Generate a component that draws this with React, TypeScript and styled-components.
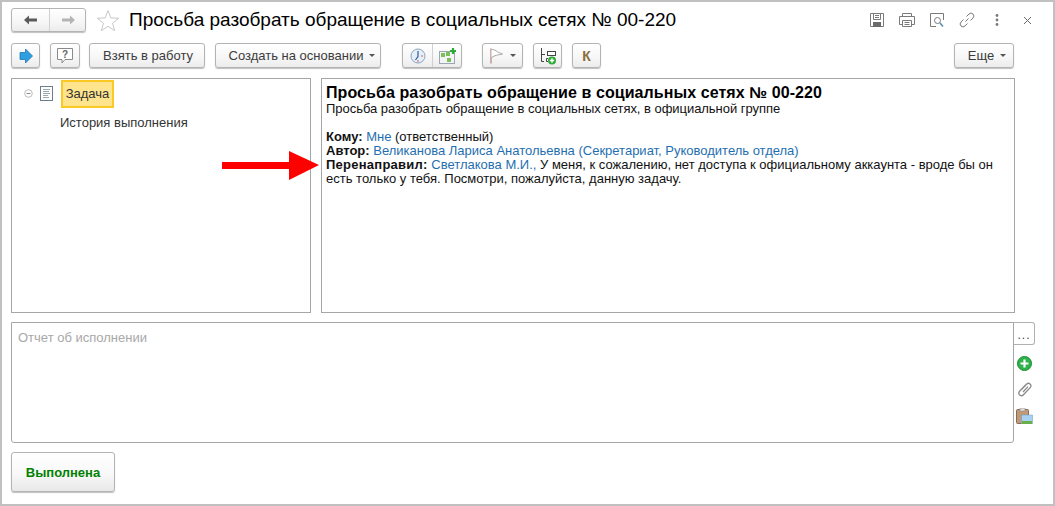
import React from "react";
import styled, { createGlobalStyle } from "styled-components";

const Global = createGlobalStyle`
  html, body { margin: 0; padding: 0; background: #fff; }
  body { font-family: "Liberation Sans", Arial, sans-serif; font-size: 13px; color: #1a1a1a; }
`;

const Frame = styled.div`
  position: relative;
  box-sizing: border-box;
  width: 1055px;
  height: 506px;
  border: 2px solid #c0c0c0;
  padding: 6px 18px 0 9px;
  background: #fff;
  overflow: hidden;
`;

const Header = styled.div`
  display: flex;
  align-items: center;
  height: 24px;
`;

const Title = styled.h1`
  margin: 0 0 0 9px;
  font-size: 19px;
  font-weight: 400;
  color: #000;
  white-space: nowrap;
  flex: 1;
  line-height: 26px;
`;

const Group = styled.div<{ $h?: number; $ml?: number }>`
  display: flex;
  box-sizing: border-box;
  height: ${(p) => p.$h ?? 24}px;
  margin-left: ${(p) => p.$ml ?? 0}px;
  border: 1px solid #b4b4b4;
  border-radius: 3px;
  background: linear-gradient(#ffffff, #f6f6f6 60%, #ececec);
  box-shadow: 0 1px 1px rgba(0, 0, 0, 0.25);
`;

const Seg = styled.div<{ $w: number; $sep?: boolean }>`
  width: ${(p) => p.$w}px;
  display: flex;
  align-items: center;
  justify-content: center;
  border-left: ${(p) => (p.$sep ? "1px solid #d0d0d0" : "none")};
`;

const StarWrap = styled.div`
  margin-left: 10px;
  display: flex;
`;

const TitleIcons = styled.div`
  display: flex;
  align-items: center;
  margin-right: -7px;
`;

const TitleIcon = styled.div`
  width: 30px;
  display: flex;
  justify-content: center;
`;

const Toolbar = styled.div`
  display: flex;
  align-items: flex-start;
  margin-top: 11px;
  height: 35px;
  padding-right: 21px;
`;

const Btn = styled.div<{ $w: number; $ml: number; $pl?: number }>`
  box-sizing: border-box;
  width: ${(p) => p.$w}px;
  margin-left: ${(p) => p.$ml}px;
  padding-left: ${(p) => p.$pl ?? 0}px;
  height: 25px;
  display: flex;
  align-items: center;
  justify-content: center;
  gap: 6px;
  border: 1px solid #b4b4b4;
  border-radius: 3px;
  background: linear-gradient(#ffffff, #f6f6f6 60%, #ececec);
  box-shadow: 0 1px 1px rgba(0, 0, 0, 0.25);
  color: #3c3c3c;
  font-size: 13px;
  white-space: nowrap;
`;

const Caret = styled.span`
  display: inline-block;
  width: 0;
  height: 0;
  border-left: 3px solid transparent;
  border-right: 3px solid transparent;
  border-top: 3px solid #555;
`;

const KLetter = styled.span`
  font-weight: 700;
  font-size: 14px;
  color: #8a6d3b;
`;

const Spacer = styled.div`
  flex: 1;
`;

const Panels = styled.div`
  display: flex;
  gap: 10px;
  height: 235px;
`;

const TreePanel = styled.div`
  box-sizing: border-box;
  width: 300px;
  border: 1px solid #a6a6a6;
  padding-top: 1px;
`;

const TreeRow = styled.div`
  display: flex;
  align-items: center;
  height: 27px;
  padding-left: 12px;
`;

const DocIcon = styled.div`
  display: flex;
  margin-left: 7px;
`;

const Selected = styled.div`
  box-sizing: border-box;
  margin-left: 8px;
  height: 28px;
  width: 53px;
  border: 2px solid #fcc824;
  background: #fee48c;
  display: flex;
  align-items: center;
  justify-content: center;
  color: #333;
`;

const TreeChild = styled.div`
  margin: 9px 0 0 48px;
  color: #333;
  line-height: 14px;
`;

const InfoPanel = styled.div`
  box-sizing: border-box;
  width: 694px;
  border: 1px solid #a6a6a6;
  padding: 4px 4px 0 4px;
  line-height: 14px;
  color: #111;
`;

const InfoTitle = styled.div`
  font-size: 16px;
  font-weight: 700;
  line-height: 19px;
  letter-spacing: 0.08px;
  color: #000;
`;

const Paragraph = styled.div`
  margin-bottom: 14px;
  letter-spacing: -0.04px;
`;

const WideLabel = styled.b`
  letter-spacing: 0.25px;
`;

const Link = styled.span`
  color: #1f6fb0;
`;

const Arrow = styled.svg`
  position: absolute;
  left: 220px;
  top: 149px;
`;

const ReportRow = styled.div`
  display: flex;
  margin-top: 9px;
  height: 121px;
`;

const ReportBox = styled.div`
  box-sizing: border-box;
  width: 1003px;
  border: 1px solid #a6a6a6;
  border-radius: 0 0 3px 3px;
  padding: 7px 6px;
  color: #a8a8a8;
  line-height: 16px;
`;

const Side = styled.div`
  display: flex;
  flex-direction: column;
  width: 21px;
`;

const DotsBtn = styled.div`
  box-sizing: border-box;
  height: 23px;
  width: 22px;
  margin-left: -1px;
  border: 1px solid #b0b0b0;
  border-left-color: #a6a6a6;
  border-radius: 0 3px 3px 0;
  display: flex;
  align-items: center;
  justify-content: center;
  color: #444;
  font-size: 12px;
  letter-spacing: 1px;
  padding-top: 2px;
`;

const SideIcons = styled.div`
  display: flex;
  flex-direction: column;
  align-items: center;
  gap: 11px;
  margin-top: 11px;
`;

const Footer = styled.div`
  margin-top: 9px;
`;

const DoneBtn = styled.div`
  box-sizing: border-box;
  width: 104px;
  height: 40px;
  display: flex;
  align-items: center;
  justify-content: center;
  border: 1px solid #b4b4b4;
  border-radius: 3px;
  background: linear-gradient(#ffffff, #f8f8f8 55%, #e8e8e8);
  box-shadow: 0 1px 1px rgba(0, 0, 0, 0.25);
  color: #008000;
  font-weight: 700;
  font-size: 13px;
`;

const IconStroke = { fill: "none", stroke: "#7a7a7a", strokeWidth: 1 };

export default function App() {
  return (
    <>
      <Global />
      <Frame>
        <Header>
          <Group>
            <Seg $w={37}>
              <svg width="16" height="12" viewBox="0 0 16 12">
                <path d="M1 6 L6 1.5 V4.5 H14 V7.5 H6 V10.5 Z" fill="#5a5a5a" />
              </svg>
            </Seg>
            <Seg $w={35} $sep>
              <svg width="16" height="12" viewBox="0 0 16 12">
                <path d="M15 6 L10 1.5 V4.5 H2 V7.5 H10 V10.5 Z" fill="#b4b4b4" />
              </svg>
            </Seg>
          </Group>
          <StarWrap>
            <svg width="24" height="23" viewBox="0 0 24 23">
              <path d="M12 1.5 L14.8 8.9 L22.8 9.2 L16.5 14.1 L18.7 21.7 L12 17.3 L5.3 21.7 L7.5 14.1 L1.2 9.2 L9.2 8.9 Z" fill="#fff" stroke="#c8c8c8" />
            </svg>
          </StarWrap>
          <Title>Просьба разобрать обращение в социальных сетях № 00-220</Title>
          <TitleIcons>
            <TitleIcon>
              <svg width="16" height="16" viewBox="0 0 16 16">
                <path d="M1.5 1.5 H14.5 V14.5 H1.5 Z" {...IconStroke} />
                <path d="M4.5 1.5 V7.5 H11.5 V1.5 M6 3.5 H10 M6 5.5 H10" {...IconStroke} />
                <rect x="4" y="10" width="8" height="5" fill="#6a6a6a" />
              </svg>
            </TitleIcon>
            <TitleIcon>
              <svg width="18" height="16" viewBox="0 0 18 16">
                <path d="M4.5 4.5 V1.5 H13.5 V4.5 M4.5 12.5 H1.5 V4.5 H16.5 V12.5 H13.5" {...IconStroke} />
                <path d="M4.5 8.5 H13.5 V14.5 H4.5 Z M6.5 10.5 H11.5 M6.5 12.5 H11.5" {...IconStroke} />
              </svg>
            </TitleIcon>
            <TitleIcon>
              <svg width="16" height="16" viewBox="0 0 16 16">
                <path d="M14.5 1.5 H1.5 V14.5 H7" {...IconStroke} />
                <path d="M14.5 1.5 V8" {...IconStroke} />
                <circle cx="8.5" cy="8.5" r="3" {...IconStroke} />
                <path d="M11 11 L14 14.5" stroke="#5a8aa8" strokeWidth="1.5" />
              </svg>
            </TitleIcon>
            <TitleIcon>
              <svg width="16" height="16" viewBox="0 0 16 16">
                <path d="M6.5 9.5 L9.5 6.5 M7.5 4.5 L10 2 A2.8 2.8 0 0 1 14 6 L11.5 8.5 M8.5 11.5 L6 14 A2.8 2.8 0 0 1 2 10 L4.5 7.5" {...IconStroke} />
              </svg>
            </TitleIcon>
            <TitleIcon>
              <svg width="4" height="14" viewBox="0 0 4 14">
                <circle cx="2" cy="2.5" r="1.4" fill="#7a7a7a" />
                <circle cx="2" cy="7" r="1.4" fill="#7a7a7a" />
                <circle cx="2" cy="11.5" r="1.4" fill="#7a7a7a" />
              </svg>
            </TitleIcon>
            <TitleIcon>
              <svg width="9" height="9" viewBox="0 0 9 9">
                <path d="M1 1 L8 8 M8 1 L1 8" stroke="#6a6a6a" strokeWidth="1" fill="none" />
              </svg>
            </TitleIcon>
          </TitleIcons>
        </Header>

        <Toolbar>
          <Btn $w={29} $ml={0}>
            <svg width="14" height="16" viewBox="0 0 14 16">
              <path d="M1 4.5 H6.5 V1 L13.5 8 L6.5 15 V11.5 H1 Z" fill="#2f9fe0" stroke="#1c79b8" strokeWidth="0.8" />
            </svg>
          </Btn>
          <Btn $w={30} $ml={10}>
            <svg width="18" height="18" viewBox="0 0 18 18">
              <path d="M1.5 1.5 H16.5 V12.5 H9 L6 16 V12.5 H1.5 Z" fill="#fff" stroke="#8a8a8a" />
              <text x="9" y="10.5" fontSize="10" fontWeight="700" textAnchor="middle" fill="#666" fontFamily="Liberation Sans">?</text>
            </svg>
          </Btn>
          <Btn $w={116} $ml={9} $pl={2}>Взять в работу</Btn>
          <Btn $w={166} $ml={10} $pl={8}>Создать на основании <Caret /></Btn>
          <Group $h={25} $ml={21}>
            <Seg $w={29}>
              <svg width="16" height="16" viewBox="0 0 16 16">
                <circle cx="8" cy="8" r="7" fill="#e6eef6" stroke="#8aa4c0" />
                <path d="M8 3 V8.5 L5.5 12" stroke="#2f5f9f" strokeWidth="1.2" fill="none" />
                <circle cx="12" cy="8" r="0.8" fill="#d05050" />
                <circle cx="8" cy="13" r="0.8" fill="#d05050" />
              </svg>
            </Seg>
            <Seg $w={28} $sep>
              <svg width="17" height="16" viewBox="0 0 17 16">
                <rect x="0.5" y="3.5" width="15" height="12" fill="#f2f4f6" stroke="#9aa6b0" />
                <rect x="2" y="5" width="4" height="4" fill="#7cc05c" />
                <rect x="7" y="4" width="4" height="4" fill="#7cc05c" />
                <rect x="8" y="10" width="4" height="4" fill="#7cc05c" />
                <path d="M11 3 H17 M14 0 V6" stroke="#2ea836" strokeWidth="2.2" />
              </svg>
            </Seg>
          </Group>
          <Btn $w={41} $ml={20}>
            <svg width="15" height="16" viewBox="0 0 15 16">
              <path d="M2 0.5 V15.5" stroke="#b08080" strokeWidth="1.2" />
              <path d="M2.5 1.5 C6 1 8 4.5 13.5 6 C9 7 6 7 2.5 9.5" fill="#fff" stroke="#a8a8a8" />
            </svg>
            <Caret />
          </Btn>
          <Btn $w={29} $ml={10}>
            <svg width="18" height="18" viewBox="0 0 18 18">
              <path d="M2.5 1 V14.5 H5 M2.5 7.5 H6" stroke="#444" fill="none" />
              <rect x="8.5" y="4.5" width="8" height="4" fill="#fff" stroke="#444" />
              <path d="M9 11.5 H7.5 V14.5 H9" stroke="#444" fill="none" />
              <circle cx="13" cy="13.5" r="4" fill="#2ea836" />
              <path d="M10.8 13.5 H15.2 M13 11.3 V15.7" stroke="#fff" strokeWidth="1.4" />
            </svg>
          </Btn>
          <Btn $w={29} $ml={10}><KLetter>К</KLetter></Btn>
          <Spacer />
          <Btn $w={60} $ml={0} $pl={6}>Еще <Caret /></Btn>
        </Toolbar>

        <Panels>
          <TreePanel>
            <TreeRow>
              <svg width="9" height="9" viewBox="0 0 9 9">
                <circle cx="4.5" cy="4.5" r="3.8" fill="#fff" stroke="#bbb" />
                <path d="M2.5 4.5 H6.5" stroke="#888" />
              </svg>
              <DocIcon>
                <svg width="13" height="15" viewBox="0 0 13 15">
                  <rect x="0.5" y="0.5" width="12" height="14" fill="#fff" stroke="#6a7f8a" />
                  <path d="M3 3.5 H10 M3 5.5 H9 M3 7.5 H10 M3 9.5 H8 M3 11.5 H9" stroke="#9aa8b0" />
                </svg>
              </DocIcon>
              <Selected>Задача</Selected>
            </TreeRow>
            <TreeChild>История выполнения</TreeChild>
          </TreePanel>
          <InfoPanel>
            <InfoTitle>Просьба разобрать обращение в социальных сетях № 00-220</InfoTitle>
            <Paragraph>Просьба разобрать обращение в социальных сетях, в официальной группе</Paragraph>
            <div><b>Кому:</b> <Link>Мне</Link> (ответственный)</div>
            <div><b>Автор:</b> <Link>Великанова Лариса Анатольевна (Секретариат, Руководитель отдела)</Link></div>
            <div>
              <WideLabel>Перенаправил:</WideLabel> <Link>Светлакова М.И.,</Link> У меня, к сожалению, нет доступа к официальному аккаунта - вроде бы он есть только у тебя. Посмотри, пожалуйста, данную задачу.
            </div>
          </InfoPanel>
        </Panels>

        <ReportRow>
          <ReportBox>Отчет об исполнении</ReportBox>
          <Side>
            <DotsBtn>...</DotsBtn>
            <SideIcons>
              <svg width="15" height="15" viewBox="0 0 15 15">
                <circle cx="7.5" cy="7.5" r="7" fill="#2eb24a" stroke="#1c8a34" />
                <path d="M3.5 7.5 H11.5 M7.5 3.5 V11.5" stroke="#fff" strokeWidth="2.2" />
              </svg>
              <svg width="14" height="15" viewBox="0 0 14 15">
                <path d="M3.5 7.5 L8.5 2.2 A2.4 2.4 0 0 1 12.2 5.6 L5.5 12.8 A2.6 2.6 0 0 1 1.6 9.2 L7.5 3 M5 10 L10 4.6" fill="none" stroke="#8a8a8a" strokeWidth="1.3" />
              </svg>
              <svg width="17" height="16" viewBox="0 0 17 16">
                <rect x="0.5" y="1.5" width="12" height="14" rx="1" fill="#c09a78" stroke="#8a6a50" />
                <rect x="4" y="0" width="5" height="3" fill="#ddd" stroke="#888" strokeWidth="0.5" />
                <rect x="5.5" y="7" width="11" height="9" fill="#a8d0f0" stroke="#6a9ac0" strokeWidth="0.5" />
                <rect x="6" y="13" width="10" height="3" fill="#6ab04a" />
              </svg>
            </SideIcons>
          </Side>
        </ReportRow>

        <Footer>
          <DoneBtn>Выполнена</DoneBtn>
        </Footer>

        <Arrow width="97" height="29" viewBox="0 0 97 29">
          <path d="M0 11 H67 V0 L97 14 L67 29 V18 H0 Z" fill="#fe0000" />
        </Arrow>
      </Frame>
    </>
  );
}
